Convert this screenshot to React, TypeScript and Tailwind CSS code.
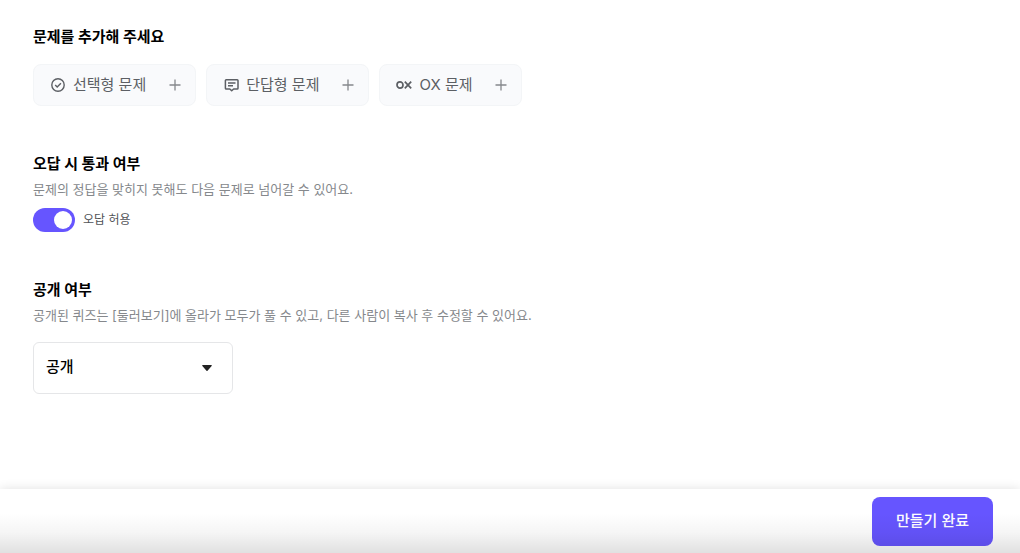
import { useState } from "react";
import type { ReactNode } from "react";

function CheckCircleIcon() {
  return (
    <svg viewBox="0 0 16 16" className="size-4" fill="none" stroke="currentColor" strokeWidth="1.4" aria-hidden="true">
      <circle cx="8" cy="8" r="6.2" />
      <path d="M5.2 8.1 7.2 10.1 10.9 6.3" />
    </svg>
  );
}

function CommentIcon() {
  return (
    <svg viewBox="0 0 16 16" className="size-4" fill="none" stroke="currentColor" strokeWidth="1.5" strokeLinejoin="round" aria-hidden="true">
      <path d="M3.2 2.8h11a.8.8 0 0 1 .8.8v7.6a.8.8 0 0 1-.8.8H10.600L8.700 13.800 6.800 12H3.200a.8.8 0 0 1-.8-.8V3.600a.8.8 0 0 1 .8-.8Z" />
      <path d="M5 6h7.500M5 8.800h5" />
    </svg>
  );
}

function OxIcon() {
  return (
    <svg viewBox="0 0 16 16" className="size-4" fill="none" stroke="currentColor" strokeWidth="1.7" aria-hidden="true">
      <ellipse cx="4" cy="8" rx="3" ry="3.1" />
      <path d="M8.8 4.7 15.2 11.3M15.2 4.7 8.8 11.3" />
    </svg>
  );
}

function PlusIcon() {
  return (
    <svg viewBox="0 0 12 12" className="size-3 text-[#85888c]" fill="none" stroke="currentColor" strokeWidth="1.3" aria-hidden="true">
      <path d="M6 .5v11M.5 6h11" />
    </svg>
  );
}

function AddButton({ icon, label }: { icon: ReactNode; label: string }) {
  return (
    <button
      type="button"
      className="flex h-[42px] items-center rounded-lg border border-[#f3f5f7] bg-[#f9fafc] pr-[14px] pl-4 text-[15px] leading-6 text-[#5c5f64]"
    >
      {icon}
      <span className="mr-[23px] ml-[7px]">{label}</span>
      <PlusIcon />
    </button>
  );
}

const questionTypes = [
  { label: "선택형 문제", icon: <CheckCircleIcon /> },
  { label: "단답형 문제", icon: <CommentIcon /> },
  { label: "OX 문제", icon: <OxIcon /> },
];

export default function App() {
  const [allowWrong, setAllowWrong] = useState(true);
  const [visibility, setVisibility] = useState("public");

  return (
    <div className="flex min-h-screen flex-col bg-white font-[Inter,'Noto_Sans_CJK_KR',sans-serif] text-black">
      <main className="flex grow flex-col gap-[45px] px-[33px] pt-6 pb-8">
        <section>
          <h2 className="text-[15px] leading-[26px] font-bold">문제를 추가해 주세요</h2>
          <div className="mt-[14px] flex flex-wrap gap-[10px]">
            {questionTypes.map((type) => (
              <AddButton key={type.label} icon={type.icon} label={type.label} />
            ))}
          </div>
        </section>

        <section>
          <h2 className="text-[15px] leading-[26px] font-bold">오답 시 통과 여부</h2>
          <p className="mt-[2px] text-[13px] leading-5 text-[#85888c]">
            문제의 정답을 맞히지 못해도 다음 문제로 넘어갈 수 있어요.
          </p>
          <label className="mt-[9px] flex w-fit cursor-pointer items-center gap-2 text-xs leading-6 text-[#505357]">
            <input
              type="checkbox"
              role="switch"
              checked={allowWrong}
              onChange={(e) => setAllowWrong(e.target.checked)}
              className="h-6 w-[42px] cursor-pointer appearance-none rounded-full bg-[#c4c7cc] p-[3px] before:block before:size-[18px] before:rounded-full before:bg-white checked:bg-[#6655ff] checked:before:ml-auto"
            />
            오답 허용
          </label>
        </section>

        <section>
          <h2 className="text-[15px] leading-[26px] font-bold">
            <label htmlFor="visibility">공개 여부</label>
          </h2>
          <p className="mt-[2px] text-[13px] leading-5 text-[#85888c]">
            공개된 퀴즈는 [둘러보기]에 올라가 모두가 풀 수 있고, 다른 사람이 복사 후 수정할 수 있어요.
          </p>
          <div className="mt-[17px] grid w-[200px] items-center">
            <select
              id="visibility"
              value={visibility}
              onChange={(e) => setVisibility(e.target.value)}
              className="col-start-1 row-start-1 h-[52px] w-full appearance-none rounded-md border border-[#e5e6e8] bg-white pr-10 pb-[2px] pl-3 text-[15px] font-medium"
            >
              <option value="public">공개</option>
              <option value="private">비공개</option>
            </select>
            <svg viewBox="0 0 10 6" className="pointer-events-none col-start-1 row-start-1 mr-[21px] h-[6px] w-[10px] justify-self-end" fill="#222" aria-hidden="true">
              <path d="M.8 0h8.4a.6.6 0 0 1 .45 1L5.5 5.7a.7.7 0 0 1-1 0L.35 1A.6.6 0 0 1 .8 0Z" />
            </svg>
          </div>
        </section>
      </main>

      <footer className="sticky bottom-0 flex h-16 items-start justify-end bg-white px-[27px] pt-2 shadow-[0_0_10px_rgba(0,0,0,0.12)]">
        <button type="button" className="h-[49px] rounded-lg bg-[#6655ff] px-6 pb-[2px] text-[15px] leading-6 font-medium text-white">
          만들기 완료
        </button>
        <div className="pointer-events-none absolute inset-x-0 bottom-0 h-10 bg-linear-to-b from-black/0 via-black/4 to-black/12" />
      </footer>
    </div>
  );
}
